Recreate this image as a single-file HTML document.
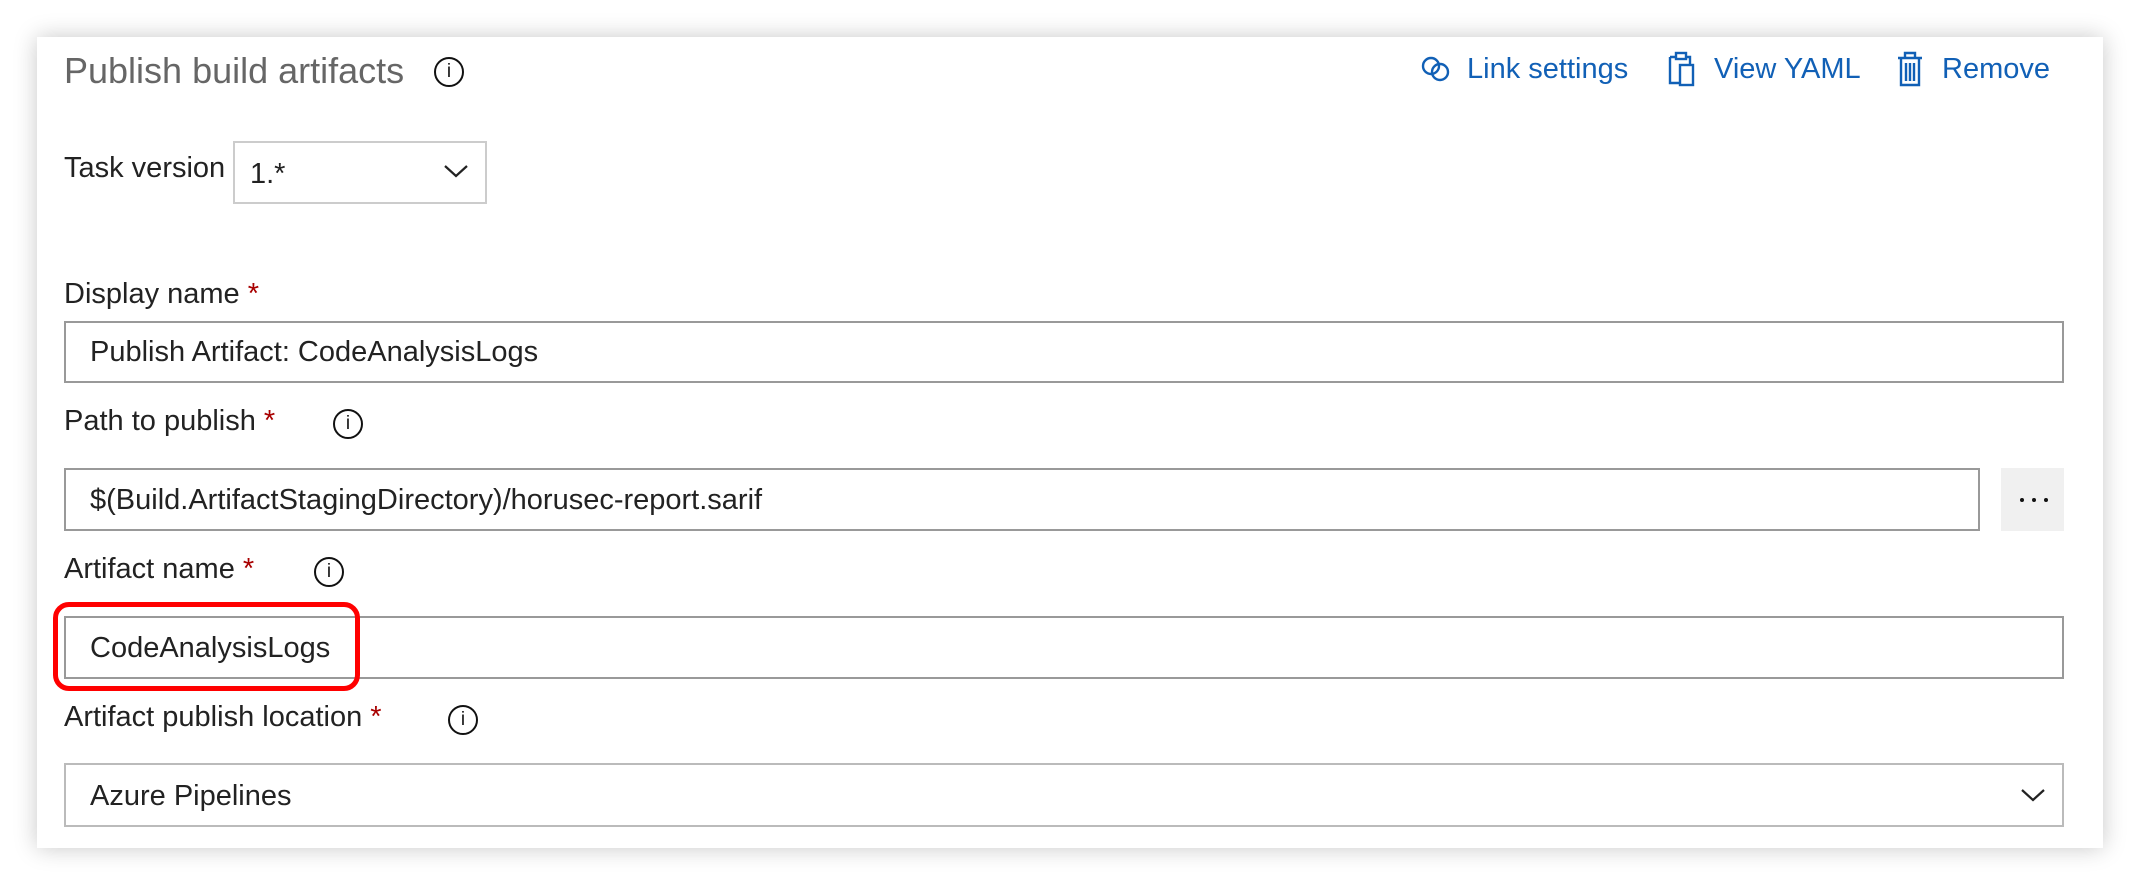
<!DOCTYPE html>
<html><head><meta charset="utf-8"><style>
html,body{margin:0;padding:0;width:2140px;height:884px;background:#fff;overflow:hidden;font-family:"Liberation Sans",sans-serif;}
.card{position:absolute;left:37px;top:37px;width:2066px;height:811px;background:#fff;box-shadow:0 0 22px rgba(0,0,0,0.22);}
.t{position:absolute;white-space:nowrap;color:#222;font-size:29px;}
.box{position:absolute;border:2px solid #999;box-sizing:border-box;background:#fff;}
.info{position:absolute;width:30px;height:30px;border:2px solid #111;border-radius:50%;box-sizing:border-box;font:19px "Liberation Sans",sans-serif;text-align:center;line-height:26px;color:#111;}
.star{color:#a80000;}
.lnk{color:#1160b6;font-size:29px;}
</style></head><body>
<div class="card"></div>

<div class="t" style="left:64px;top:50px;font-size:36px;color:#666;">Publish build artifacts</div>
<div class="info" style="left:434px;top:57px;">i</div>

<svg style="position:absolute;left:1420px;top:54px" width="32" height="30" viewBox="0 0 32 30" fill="none" stroke="#1160b6" stroke-width="2.4"><circle cx="11" cy="12" r="8"/><circle cx="20" cy="18" r="8"/></svg>
<div class="t lnk" style="left:1467px;top:53px;">Link settings</div>
<svg style="position:absolute;left:1668px;top:51px" width="30" height="36" viewBox="0 0 30 36" fill="none" stroke="#1160b6" stroke-width="2.4"><path d="M2 6h6M18 6h4v8M2 6v26h9"/><rect x="8" y="2" width="10" height="6"/><rect x="12" y="14" width="13" height="20"/></svg>
<div class="t lnk" style="left:1714px;top:53px;">View YAML</div>
<svg style="position:absolute;left:1897px;top:51px" width="26" height="36" viewBox="0 0 26 36" fill="none" stroke="#1160b6" stroke-width="2.4"><path d="M1 7h24M8 7V2h10v5M4 7v27h18V7M9 12v18M13 12v18M17 12v18"/></svg>
<div class="t lnk" style="left:1942px;top:53px;">Remove</div>

<div class="t" style="left:64px;top:152px;">Task version</div>
<div class="box" style="left:233px;top:141px;width:254px;height:63px;border-color:#ccc;"></div>
<div class="t" style="left:250px;top:158px;">1.*</div>
<svg style="position:absolute;left:444px;top:164px" width="24" height="14" viewBox="0 0 24 14" fill="none" stroke="#222" stroke-width="2.2"><path d="M1 2l11 10L23 2"/></svg>

<div class="t" style="left:64px;top:278px;">Display name <span class="star">*</span></div>
<div class="box" style="left:64px;top:321px;width:2000px;height:62px;"></div>
<div class="t" style="left:90px;top:336px;">Publish Artifact: CodeAnalysisLogs</div>

<div class="t" style="left:64px;top:405px;">Path to publish <span class="star">*</span></div>
<div class="info" style="left:333px;top:409px;">i</div>
<div class="box" style="left:64px;top:468px;width:1916px;height:63px;"></div>
<div class="t" style="left:90px;top:484px;">$(Build.ArtifactStagingDirectory)/horusec-report.sarif</div>
<div style="position:absolute;left:2001px;top:468px;width:63px;height:63px;background:#f0f0f0;"></div>
<div style="position:absolute;left:2020px;top:498px;width:4px;height:4px;border-radius:50%;background:#111;box-shadow:12px 0 #111,24px 0 #111;"></div>

<div class="t" style="left:64px;top:553px;">Artifact name <span class="star">*</span></div>
<div class="info" style="left:314px;top:557px;">i</div>
<div class="box" style="left:64px;top:616px;width:2000px;height:63px;"></div>
<div class="t" style="left:90px;top:632px;">CodeAnalysisLogs</div>
<div style="position:absolute;left:53px;top:602px;width:307px;height:89px;border:5px solid #f00;border-radius:16px;box-sizing:border-box;"></div>

<div class="t" style="left:64px;top:701px;">Artifact publish location <span class="star">*</span></div>
<div class="info" style="left:448px;top:705px;">i</div>
<div class="box" style="left:64px;top:763px;width:2000px;height:64px;border-color:#bbb;"></div>
<div class="t" style="left:90px;top:780px;">Azure Pipelines</div>
<svg style="position:absolute;left:2021px;top:788px" width="24" height="14" viewBox="0 0 24 14" fill="none" stroke="#222" stroke-width="2.2"><path d="M1 2l11 10L23 2"/></svg>
</body></html>
